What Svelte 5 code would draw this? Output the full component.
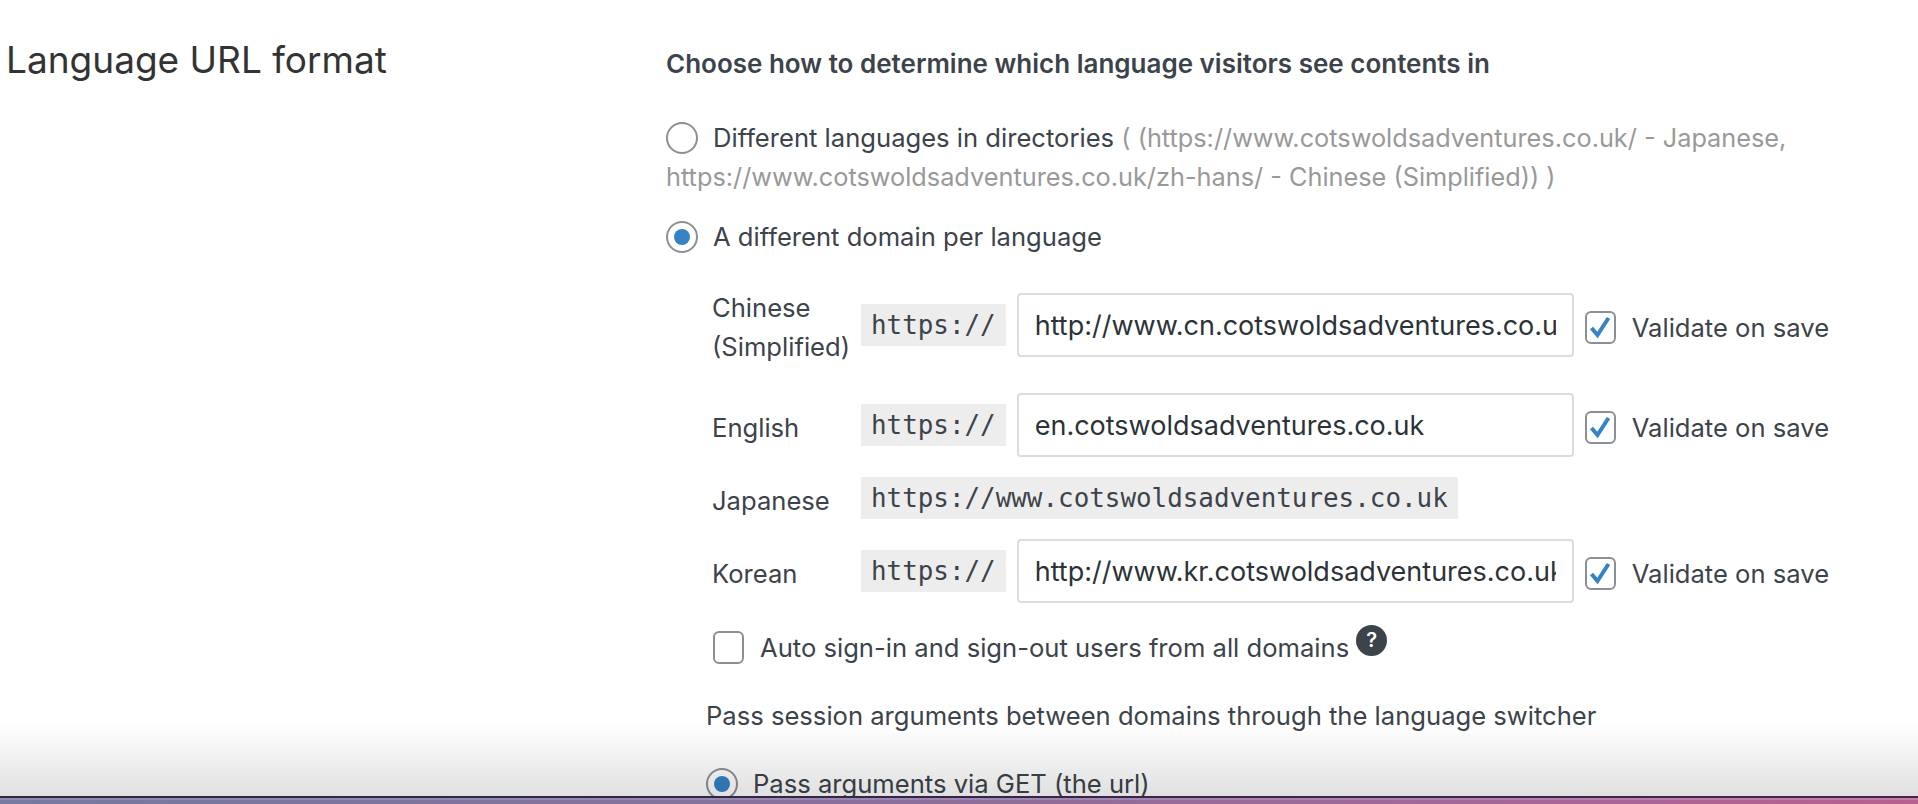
<script>
  const domains = [
    { name: 'Chinese (Simplified)', value: 'http://www.cn.cotswoldsadventures.co.uk' },
    { name: 'English', value: 'en.cotswoldsadventures.co.uk' },
    { name: 'Japanese', fixed: 'https://www.cotswoldsadventures.co.uk' },
    { name: 'Korean', value: 'http://www.kr.cotswoldsadventures.co.uk' },
  ]
</script>

<div class="page">
  <section class="settings">
    <h2 class="section-title">Language URL format</h2>

    <div class="section-body">
      <h4 class="choose">Choose how to determine which language visitors see contents in</h4>

      <p class="option first">
        <span class="radio"></span><span class="option-label">Different languages in directories</span>
        <span class="muted">( (https://www.cotswoldsadventures.co.uk/ - Japanese, https://www.cotswoldsadventures.co.uk/zh-hans/ - Chinese (Simplified)) )</span>
      </p>

      <p class="option second">
        <span class="radio checked"></span><span class="option-label">A different domain per language</span>
      </p>

      <div class="domains">
        {#each domains as d}
          <div class="domain-row" class:tight={d.fixed}>
            <span class="lang">{d.name}</span>
            {#if d.fixed}
              <code>{d.fixed}</code>
            {:else}
              <code>https://</code>
              <input type="text" value={d.value} />
              <span class="checkbox">
                <svg viewBox="0 0 27 29" width="27" height="29"><path d="M4.5 15 L10.5 22 L21.5 5" fill="none" stroke="#3582c4" stroke-width="4" /></svg>
              </span>
              <span class="validate">Validate on save</span>
            {/if}
          </div>
        {/each}
      </div>

      <div class="auto-sign">
        <span class="checkbox"></span>
        <span class="auto-label">Auto sign-in and sign-out users from all domains</span>
        <span class="help">?</span>
      </div>

      <div class="session">
        <p class="session-title">Pass session arguments between domains through the language switcher</p>
        <p class="option session-opt">
          <span class="radio checked"></span><span class="option-label">Pass arguments via GET (the url)</span>
        </p>
      </div>
    </div>
  </section>

  <div class="dock">
    <div class="fade"></div>
    <div class="dock-line"></div>
    <div class="dock-glow"></div>
    <div class="dock-wall"></div>
  </div>
</div>

<style>
  :global(body) {
    margin: 0;
    background: #fff;
  }

  .page {
    position: relative;
    height: 804px;
    overflow: hidden;
    background: #fff;
    color: #3c434a;
    font-family: Inter, 'Liberation Sans', sans-serif;
    font-size: 25.6px;
    line-height: 39px;
  }

  p, h2, h4 {
    margin: 0;
  }

  .settings {
    display: flex;
  }

  .section-title {
    flex: none;
    width: 660px;
    padding: 36px 0 0 6px;
    font-size: 37px;
    line-height: 48px;
    font-weight: 400;
    color: #333;
  }

  .section-body {
    flex: none;
    width: 1251px;
    padding-top: 44px;
  }

  .choose {
    font-size: 26px;
    font-weight: 600;
  }

  .option.first {
    margin-top: 35px;
  }

  .option.second {
    margin-top: 21px;
  }

  .radio {
    display: inline-block;
    box-sizing: border-box;
    width: 32px;
    height: 32px;
    margin-right: 15px;
    vertical-align: -7px;
    border: 2px solid #8c8f94;
    border-radius: 50%;
    background: #fff;
    position: relative;
  }

  .radio.checked::after {
    content: '';
    position: absolute;
    left: 6px;
    top: 6px;
    width: 16px;
    height: 16px;
    border-radius: 50%;
    background: #3582c4;
  }

  .muted {
    color: #999;
    font-size: 25.3px;
  }

  .domains {
    margin-top: 37px;
    padding-left: 46px;
    display: flex;
    flex-direction: column;
    gap: 36px;
  }

  .domain-row {
    display: flex;
    align-items: center;
    height: 64px;
  }

  .domain-row.tight {
    height: 42px;
    margin: -16px 0;
  }

  .lang {
    flex: none;
    width: 149px;
    padding-right: 10px;
    box-sizing: border-box;
    margin-top: 4px;
  }

  code {
    flex: none;
    box-sizing: border-box;
    height: 42px;
    padding: 0 10px;
    background: #ededed;
    font-family: 'DejaVu Sans Mono', 'Liberation Mono', monospace;
    font-size: 25.9px;
    line-height: 42px;
  }

  input {
    flex: none;
    box-sizing: border-box;
    width: 557px;
    height: 64px;
    margin-left: 11px;
    padding: 0 16px;
    border: 2px solid #dcdcde;
    border-radius: 4px;
    background: #fff;
    color: #2c3338;
    font-family: inherit;
    font-size: 27px;
    outline: none;
  }

  .checkbox {
    flex: none;
    box-sizing: border-box;
    display: flex;
    align-items: center;
    justify-content: center;
    width: 31px;
    height: 33px;
    border: 2px solid #8c8f94;
    border-radius: 6px;
    background: #fff;
  }

  .domain-row .checkbox {
    margin-left: 11px;
    margin-top: 4px;
  }

  .validate {
    margin-left: 16px;
    margin-top: 4px;
    white-space: nowrap;
  }

  .auto-sign {
    display: flex;
    align-items: center;
    margin-top: 28px;
    padding-left: 47px;
    height: 32px;
  }

  .auto-label {
    margin-left: 16px;
    white-space: nowrap;
  }

  .help {
    width: 31px;
    height: 31px;
    margin: -13px 0 0 7px;
    border-radius: 50%;
    background: #3c434a;
    color: #fff;
    text-align: center;
    font-size: 20px;
    line-height: 31px;
    font-weight: 600;
  }

  .session {
    margin-top: 33px;
    padding-left: 40px;
  }

  .session-opt {
    margin-top: 29px;
  }

  .dock {
    position: absolute;
    left: 0;
    right: 0;
    bottom: 0;
  }

  .fade {
    height: 72px;
    background: linear-gradient(to bottom, rgba(0, 0, 0, 0), rgba(0, 0, 0, 0.12));
  }

  .dock-line {
    height: 2px;
    background: linear-gradient(to right, #2a2a42, #33254a 50%, #4d2348);
  }

  .dock-glow {
    height: 2px;
    background: linear-gradient(to right, #8f8aae, #9b86ad 50%, #c080a8);
  }

  .dock-wall {
    height: 4px;
    background: linear-gradient(to right, #767aa0, #85709a 40%, #a06898 75%, #b8608f);
  }
</style>
